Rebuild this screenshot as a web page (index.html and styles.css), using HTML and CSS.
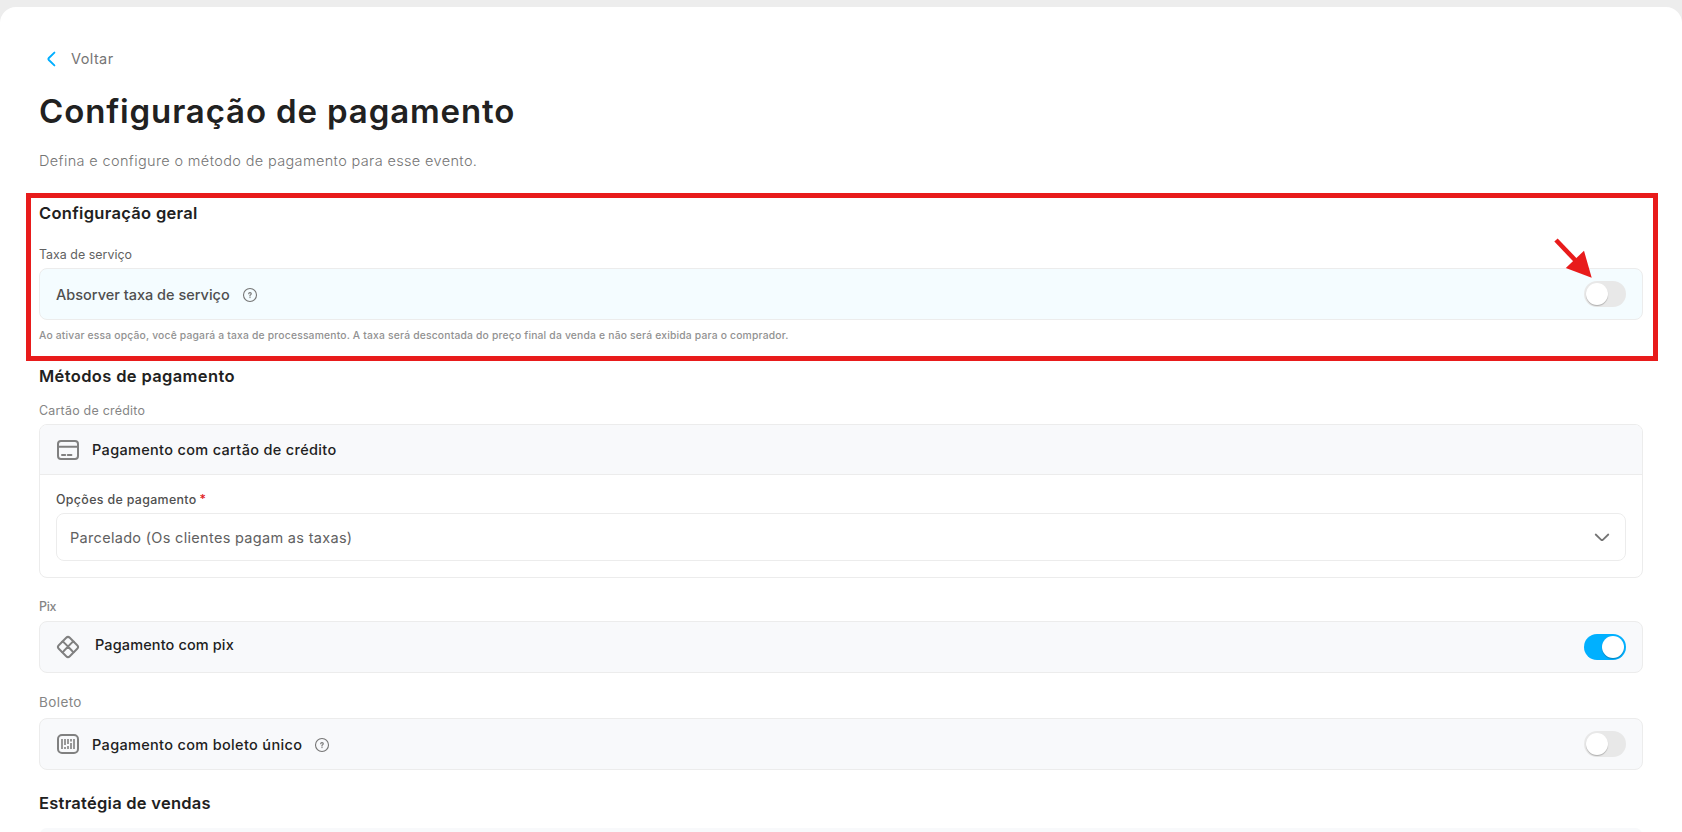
FILE: index.html
```html
<!DOCTYPE html>
<html lang="pt-BR">
<head>
<meta charset="utf-8">
<title>Configuração de pagamento</title>
<link rel="stylesheet" href="styles.css">
</head>
<body>
<main class="page">
  <a class="back">
    <svg class="back-icon" width="24" height="24" viewBox="0 0 24 24"><path d="M15.4 5.6L9.6 11.3Q9 12 9.6 12.7L15.4 18.4"/></svg>
    <span class="back-text">Voltar</span>
  </a>
  <h1 class="title">Configuração de pagamento</h1>
  <p class="subtitle">Defina e configure o método de pagamento para esse evento.</p>

  <section class="general">
    <h2 class="heading heading-general">Configuração geral</h2>
    <div class="label label-fee">Taxa de serviço</div>
    <div class="box box-fee">
      <span class="fee-text">Absorver taxa de serviço</span>
      <svg class="help" width="16" height="16" viewBox="0 0 16 16"><circle cx="8" cy="8" r="6.5"/><path d="M6.7 6.8Q6.7 5.6 8 5.6T9.3 6.8Q9.3 7.6 8 8.2V8.8M8 10V10.6"/></svg>
      <span class="toggle"><span class="knob"></span></span>
    </div>
    <p class="note">Ao ativar essa opção, você pagará a taxa de processamento. A taxa será descontada do preço final da venda e não será exibida para o comprador.</p>
    <div class="highlight"></div>
    <svg class="arrow" width="40" height="42" viewBox="0 0 40 42"><path class="arrow-shaft" d="M3 3L24 25"/><path class="arrow-head" d="M38.7 40.7L12.8 31L31 13.8Z"/></svg>
  </section>

  <h2 class="heading heading-methods">Métodos de pagamento</h2>
  <div class="label label-card">Cartão de crédito</div>
  <div class="card">
    <div class="card-head">
      <svg class="icon" width="24" height="24" viewBox="0 0 24 24"><rect x="2" y="3" width="20" height="18" rx="3"/><path d="M2 8.7H22M6 17H9.2M11.8 17H15.4"/></svg>
      <span class="method method-card">Pagamento com cartão de crédito</span>
    </div>
    <div class="card-body">
      <div class="field-label">Opções de pagamento<span class="required">*</span></div>
      <div class="select">
        <span>Parcelado (Os clientes pagam as taxas)</span>
        <svg class="chevron" width="16" height="16" viewBox="0 0 16 16"><path d="M1.7 5.5L7.2 10.8Q8 11.5 8.8 10.8L14.3 5.5"/></svg>
      </div>
    </div>
  </div>

  <div class="label label-pix">Pix</div>
  <div class="box">
    <svg class="icon" width="24" height="24" viewBox="0 0 24 24"><path d="M10.2 2.8Q12 1 13.8 2.8L21.2 10.2Q23 12 21.2 13.8L13.8 21.2Q12 23 10.2 21.2L2.8 13.8Q1 12 2.8 10.2Z"/><path d="M6.2 6.8Q7.4 6.8 8.4 7.9L16 15.8Q17 17 17.8 17M17.8 6.8Q16.6 6.8 15.6 7.9L8 15.8Q7 17 6.2 17"/></svg>
    <span class="method method-pix">Pagamento com pix</span>
    <span class="toggle toggle-on"><span class="knob"></span></span>
  </div>

  <div class="label label-boleto">Boleto</div>
  <div class="box">
    <svg class="icon" width="24" height="24" viewBox="0 0 24 24"><rect x="2" y="3" width="20" height="18" rx="4"/><path class="bars" d="M6 7V17M9 7V13M9 15V17M12 7V12M12 14V17M15 7V9.5M15 11V17M18 7V17"/></svg>
    <span class="method method-boleto">Pagamento com boleto único</span>
    <svg class="help" width="16" height="16" viewBox="0 0 16 16"><circle cx="8" cy="8" r="6.5"/><path d="M6.7 6.8Q6.7 5.6 8 5.6T9.3 6.8Q9.3 7.6 8 8.2V8.8M8 10V10.6"/></svg>
    <span class="toggle"><span class="knob"></span></span>
  </div>

  <h2 class="heading heading-sales">Estratégia de vendas</h2>
  <div class="box box-sales"></div>
</main>
</body>
</html>
```
FILE: styles.css
```css
* { box-sizing: border-box; }
html, body { height: 100%; }
body {
  margin: 0;
  padding-top: 7px;
  overflow: hidden;
  background: #ededed;
  font-family: Inter, "Open Sans", sans-serif;
  font-size: 14.5px;
  color: #212121;
}
.page {
  height: 100%;
  padding: 40px 39px 0;
  overflow: hidden;
  background: #fff;
  border-radius: 16px 16px 0 0;
}
h1, h2, p { margin: 0; }
svg { flex: none; fill: none; stroke-linecap: round; stroke-linejoin: round; }

.back {
  display: flex;
  align-items: center;
  gap: 8px;
  height: 24px;
  color: #757575;
  letter-spacing: 0.4px;
}
.back-icon { stroke: #00aeff; stroke-width: 1.9; }
.back-text { padding-bottom: 1px; }
.title {
  margin-top: 16px;
  font-size: 33px;
  font-weight: 600;
  line-height: 48px;
  letter-spacing: 0.87px;
}
.subtitle {
  margin-top: 15px;
  line-height: 22px;
  font-weight: 300;
  color: #757575;
  letter-spacing: 0.36px;
}

.heading { font-size: 16.5px; font-weight: 600; line-height: 24px; }
.heading-general { letter-spacing: 0.31px; }
.heading-methods { margin-top: 21px; letter-spacing: 0.36px; }
.heading-sales { margin-top: 21px; letter-spacing: 0.26px; }

.label { font-size: 12.4px; line-height: 18px; color: #858585; }
.label-fee { margin-top: 21px; color: #616161; letter-spacing: 0.02px; }
.label-card { margin-top: 14px; letter-spacing: 0.25px; }
.label-pix { margin-top: 20px; margin-bottom: 5px; font-weight: 500; letter-spacing: -0.3px; }
.label-boleto { margin: 19px 0 6px; font-size: 13.5px; line-height: 20px; letter-spacing: 0.4px; }

.box {
  display: flex;
  align-items: center;
  height: 52px;
  padding: 0 16px;
  border: 1px solid #ececec;
  border-radius: 8px;
  background: #f8f9fb;
}
.box-fee { margin-top: 4px; background: #f4fcff; }
.box-sales { margin-top: 13px; border-color: #f8f9fb; }

.general { position: relative; margin-top: 29px; }
.fee-text { font-weight: 500; color: #4f4f4f; }
.help { margin-left: 12px; margin-top: 2px; stroke: #757575; stroke-width: 1.1; }
.note {
  margin-top: 8px;
  font-size: 10.3px;
  font-weight: 500;
  line-height: 15px;
  color: #919191;
  letter-spacing: 0.2px;
  white-space: nowrap;
}
.highlight {
  position: absolute;
  top: -8px;
  left: -13.5px;
  right: -14.5px;
  height: 168px;
  border: 5px solid #e81b1b;
}
.arrow { position: absolute; top: 36px; right: 50px; }
.arrow-shaft { stroke: #e81b1b; stroke-width: 4.6; stroke-linecap: butt; }
.arrow-head { fill: #e81b1b; }

.toggle {
  display: flex;
  width: 42px;
  height: 26px;
  margin-left: auto;
  padding: 2px;
  border-radius: 13px;
  background: #e8e8e8;
}
.toggle-on { justify-content: flex-end; background: #00b0ff; }
.knob {
  width: 22px;
  height: 22px;
  border-radius: 50%;
  background: #fff;
  box-shadow: 0 1px 1px rgba(0, 0, 0, 0.25);
}

.icon { stroke: #808080; stroke-width: 2; }
.bars { stroke-width: 1.6; stroke-linecap: butt; }
.method { margin-left: 12px; font-weight: 500; letter-spacing: 0.33px; }
.method-pix { margin-left: 15px; padding-bottom: 5px; letter-spacing: 0.12px; }

.card { margin-top: 4px; border: 1px solid #ececec; border-radius: 8px; overflow: hidden; }
.card-head {
  display: flex;
  align-items: center;
  height: 50px;
  padding: 0 16px;
  border-bottom: 1px solid #ececec;
  background: #f8f9fb;
}
.card-body { padding: 16px; }
.field-label { font-size: 12.4px; font-weight: 500; line-height: 18px; color: #4f4f4f; letter-spacing: 0.34px; }
.required { margin-left: 3px; color: #e02020; }
.select {
  display: flex;
  align-items: center;
  justify-content: space-between;
  height: 48px;
  margin-top: 4px;
  padding: 0 15px 0 13px;
  border: 1px solid #ececec;
  border-radius: 8px;
  color: #616161;
  letter-spacing: 0.31px;
}
.chevron { stroke: #757575; stroke-width: 1.8; }
```
